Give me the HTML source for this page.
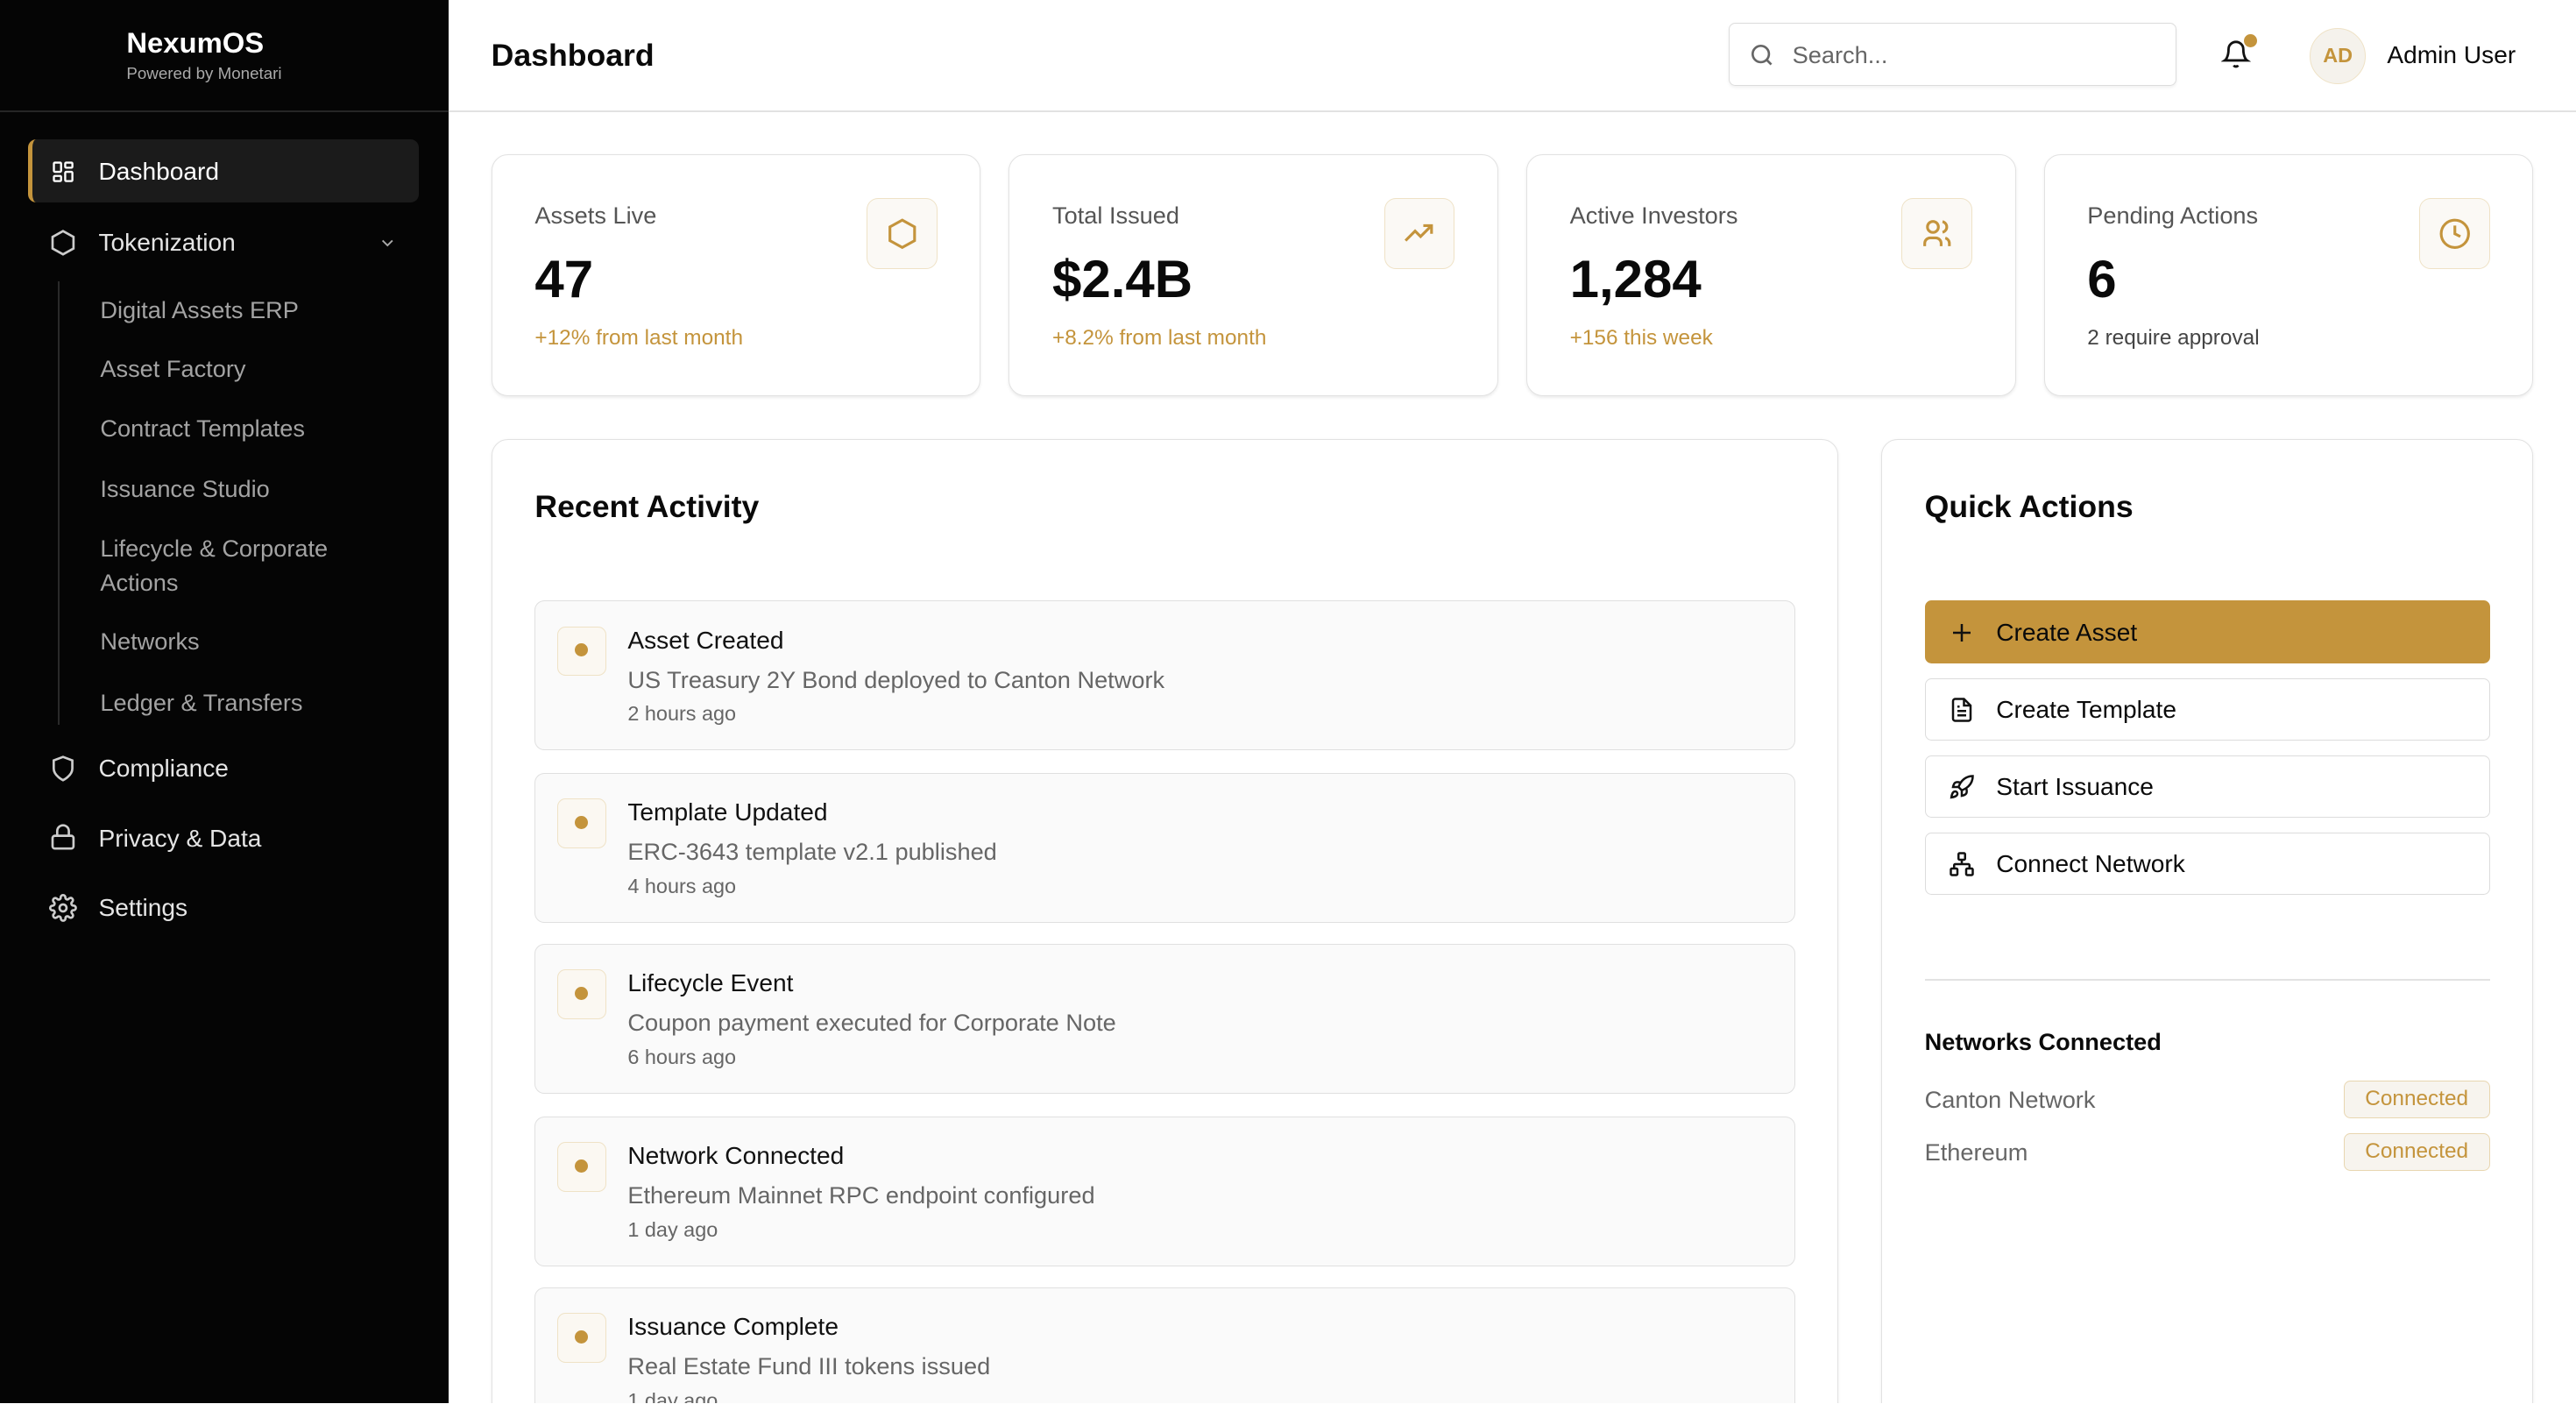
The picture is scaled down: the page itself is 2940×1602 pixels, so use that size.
<!DOCTYPE html>
<html><head><meta charset="utf-8"><style>
*{box-sizing:border-box;margin:0;padding:0}
html,body{width:2940px;height:1602px;overflow:hidden;background:#fff}
#r{zoom:1.875;width:1568px;height:854px;position:relative;font-family:"Liberation Sans",sans-serif;color:#0a0a0a;overflow:hidden}
.a{position:absolute}
.sb{left:0;top:0;width:273px;height:854px;background:#050505;color:#fff}
.nav{position:absolute;left:31px;font-size:15px;color:#e5e5e5}
.sub{position:absolute;left:61px;font-size:14.5px;color:#a3a3a3}
.card{position:absolute;background:#fff;border:1px solid #e2e2e2;border-radius:10px;box-shadow:0 1px 2px rgba(0,0,0,.08)}
.ib{position:absolute;width:43px;height:43px;border:1px solid #efe2c6;background:#fbf9f5;border-radius:7px;display:flex;align-items:center;justify-content:center}
.lbl{position:absolute;left:26px;top:28px;font-size:14.5px;color:#555}
.big{position:absolute;left:26px;top:57px;font-size:32px;font-weight:bold}
.ch{position:absolute;left:26px;top:104px;font-size:13px;color:#c4943c}
.it{position:absolute;left:26px;width:767px;height:91px;background:#fafafa;border:1px solid #e0e0e0;border-radius:6px}
.it .d{position:absolute;left:13px;top:15px;width:30px;height:30px;border:1px solid #efe2c6;background:#fbf8f2;border-radius:5px}
.it .d:after{content:"";position:absolute;left:10px;top:10px;width:8px;height:8px;border-radius:50%;background:#c4943c}
.it b{position:absolute;left:56px;top:15px;font-size:15px;font-weight:normal;color:#111}
.it p{position:absolute;left:56px;top:39px;font-size:14.5px;color:#666}
.it i{position:absolute;left:56px;top:61px;font-size:12.5px;color:#666;font-style:normal}
.qb{position:absolute;left:26px;width:344px;height:38px;border:1px solid #dcdcdc;border-radius:4px;font-size:15px;display:flex;align-items:center;padding-left:14px;gap:13px;background:#fff;padding-top:1px}
.bd{position:absolute;left:281px;width:89px;height:23px;border:1px solid #e8d6b0;background:#f7f4ee;border-radius:4px;color:#c4943c;font-size:13px;text-align:center;line-height:21px}
svg{display:block}
</style></head><body><div id="r">
<div class="a sb">
  <div class="a" style="left:77px;top:16px;font-size:17.5px;font-weight:bold">NexumOS</div>
  <div class="a" style="left:77px;top:39px;font-size:10px;color:#aaa">Powered by Monetari</div>
  <div class="a" style="left:0;top:67px;width:273px;height:1px;background:#262626"></div>
  <div class="a" style="left:17px;top:85px;width:238px;height:38px;background:#1b1b1b;border-radius:5px;border-left:3px solid #c4943c"></div>
  <div class="nav" style="top:96px;color:#fff;left:60px">Dashboard</div>
  <svg class="a" style="left:31px;top:97px" width="15" height="15" viewBox="0 0 24 24" fill="none" stroke="#fff" stroke-width="2"><rect x="3" y="3" width="7" height="9" rx="1"/><rect x="14" y="3" width="7" height="5" rx="1"/><rect x="14" y="12" width="7" height="9" rx="1"/><rect x="3" y="16" width="7" height="5" rx="1"/></svg>
  <svg class="a" style="left:30px;top:139px" width="17" height="17" viewBox="0 0 24 24" fill="none" stroke="#ccc" stroke-width="2"><path d="M12 2l9 5v10l-9 5-9-5V7z"/></svg>
  <div class="nav" style="top:139px;left:60px">Tokenization</div>
  <svg class="a" style="left:230px;top:142px" width="12" height="12" viewBox="0 0 24 24" fill="none" stroke="#aaa" stroke-width="2"><path d="M6 9l6 6 6-6"/></svg>
  <div class="a" style="left:35px;top:171px;width:1px;height:270px;background:#2a2a2a"></div>
  <div class="sub" style="top:180px">Digital Assets ERP</div>
  <div class="sub" style="top:216px">Asset Factory</div>
  <div class="sub" style="top:252px">Contract Templates</div>
  <div class="sub" style="top:289px">Issuance Studio</div>
  <div class="sub" style="top:323px;line-height:21px">Lifecycle &amp; Corporate<br>Actions</div>
  <div class="sub" style="top:382px">Networks</div>
  <div class="sub" style="top:419px">Ledger &amp; Transfers</div>
  <svg class="a" style="left:30px;top:459px" width="17" height="17" viewBox="0 0 24 24" fill="none" stroke="#ccc" stroke-width="2"><path d="M12 22s8-4 8-10V5l-8-3-8 3v7c0 6 8 10 8 10z"/></svg>
  <div class="nav" style="top:459px;left:60px">Compliance</div>
  <svg class="a" style="left:30px;top:501px" width="17" height="17" viewBox="0 0 24 24" fill="none" stroke="#ccc" stroke-width="2"><rect x="3" y="11" width="18" height="11" rx="2"/><path d="M7 11V7a5 5 0 0110 0v4"/></svg>
  <div class="nav" style="top:502px;left:60px">Privacy &amp; Data</div>
  <svg class="a" style="left:30px;top:544px" width="17" height="17" viewBox="0 0 24 24" fill="none" stroke="#ccc" stroke-width="2"><circle cx="12" cy="12" r="3"/><path d="M19.4 15a1.7 1.7 0 00.3 1.8l.1.1a2 2 0 11-2.8 2.8l-.1-.1a1.7 1.7 0 00-1.8-.3 1.7 1.7 0 00-1 1.5V21a2 2 0 01-4 0v-.1a1.7 1.7 0 00-1.1-1.5 1.7 1.7 0 00-1.8.3l-.1.1a2 2 0 11-2.8-2.8l.1-.1a1.7 1.7 0 00.3-1.8 1.7 1.7 0 00-1.5-1H3a2 2 0 010-4h.1a1.7 1.7 0 001.5-1.1 1.7 1.7 0 00-.3-1.8l-.1-.1a2 2 0 112.8-2.8l.1.1a1.7 1.7 0 001.8.3H9a1.7 1.7 0 001-1.5V3a2 2 0 014 0v.1a1.7 1.7 0 001 1.5 1.7 1.7 0 001.8-.3l.1-.1a2 2 0 112.8 2.8l-.1.1a1.7 1.7 0 00-.3 1.8V9a1.7 1.7 0 001.5 1H21a2 2 0 010 4h-.1a1.7 1.7 0 00-1.5 1z"/></svg>
  <div class="nav" style="top:544px;left:60px">Settings</div>
</div>
<div class="a" style="left:273px;top:67px;width:1295px;height:1px;background:#e2e2e2"></div>
<div class="a" style="left:299px;top:23px;font-size:19px;font-weight:bold">Dashboard</div>
<div class="a" style="left:1052px;top:14px;width:273px;height:38px;border:1px solid #dcdcdc;border-radius:4px;box-shadow:0 1px 2px rgba(0,0,0,.06)"></div>
<svg class="a" style="left:1064px;top:25px" width="17" height="17" viewBox="0 0 24 24" fill="none" stroke="#666" stroke-width="2"><circle cx="11" cy="11" r="7"/><path d="M20 20l-4-4"/></svg>
<div class="a" style="left:1091px;top:25px;font-size:14.5px;color:#666">Search...</div>
<svg class="a" style="left:1352px;top:24px" width="18" height="18" viewBox="0 0 24 24" fill="none" stroke="#111" stroke-width="2"><path d="M6 8a6 6 0 0112 0c0 7 3 9 3 9H3s3-2 3-9M10.3 21a1.9 1.9 0 003.4 0"/></svg>
<div class="a" style="left:1366px;top:21px;width:8px;height:8px;border-radius:50%;background:#c4943c"></div>
<div class="a" style="left:1406px;top:17px;width:34px;height:34px;border-radius:50%;background:#f5f2ec;border:1px solid #efe2c6;color:#c4943c;font-size:12.5px;font-weight:bold;text-align:center;line-height:32px">AD</div>
<div class="a" style="left:1453px;top:25px;font-size:15px">Admin User</div>
<div class="card" style="left:299px;top:94px;width:298px;height:147px"><div class="lbl">Assets Live</div><div class="big">47</div><div class="ch">+12% from last month</div>
<div class="ib" style="left:228px;top:26px"><svg width="20" height="20" viewBox="0 0 24 24" fill="none" stroke="#c4943c" stroke-width="2"><path d="M12 2l9 5v10l-9 5-9-5V7z"/></svg></div></div>
<div class="card" style="left:614px;top:94px;width:298px;height:147px"><div class="lbl">Total Issued</div><div class="big">$2.4B</div><div class="ch">+8.2% from last month</div>
<div class="ib" style="left:228px;top:26px"><svg width="20" height="20" viewBox="0 0 24 24" fill="none" stroke="#c4943c" stroke-width="2"><path d="M2 17l7-7 4 4 8-8M15 6h6v6"/></svg></div></div>
<div class="card" style="left:929px;top:94px;width:298px;height:147px"><div class="lbl">Active Investors</div><div class="big">1,284</div><div class="ch">+156 this week</div>
<div class="ib" style="left:228px;top:26px"><svg width="20" height="20" viewBox="0 0 24 24" fill="none" stroke="#c4943c" stroke-width="2"><circle cx="9" cy="7" r="4"/><path d="M3 21v-2a4 4 0 014-4h4a4 4 0 014 4v2M16 3.1a4 4 0 010 7.8M21 21v-2a4 4 0 00-3-3.9"/></svg></div></div>
<div class="card" style="left:1244px;top:94px;width:298px;height:147px"><div class="lbl">Pending Actions</div><div class="big">6</div><div class="ch" style="color:#444">2 require approval</div>
<div class="ib" style="left:228px;top:26px"><svg width="20" height="20" viewBox="0 0 24 24" fill="none" stroke="#c4943c" stroke-width="2"><circle cx="12" cy="12" r="10"/><path d="M12 6v6l4 2"/></svg></div></div>
<div class="card" style="left:299px;top:267px;width:820px;height:620px">
  <div class="a" style="left:26px;top:30px;font-size:19px;font-weight:bold">Recent Activity</div>
  <div class="it" style="top:98px"><div class="d"></div><b>Asset Created</b><p>US Treasury 2Y Bond deployed to Canton Network</p><i>2 hours ago</i></div>
  <div class="it" style="top:203px"><div class="d"></div><b>Template Updated</b><p>ERC-3643 template v2.1 published</p><i>4 hours ago</i></div>
  <div class="it" style="top:307px"><div class="d"></div><b>Lifecycle Event</b><p>Coupon payment executed for Corporate Note</p><i>6 hours ago</i></div>
  <div class="it" style="top:412px"><div class="d"></div><b>Network Connected</b><p>Ethereum Mainnet RPC endpoint configured</p><i>1 day ago</i></div>
  <div class="it" style="top:516px"><div class="d"></div><b>Issuance Complete</b><p>Real Estate Fund III tokens issued</p><i>1 day ago</i></div>
</div>
<div class="card" style="left:1145px;top:267px;width:397px;height:620px">
  <div class="a" style="left:26px;top:30px;font-size:19px;font-weight:bold">Quick Actions</div>
  <div class="qb" style="top:98px;background:#c4943c;border-color:#c4943c"><svg width="16" height="16" viewBox="0 0 24 24" fill="none" stroke="#111" stroke-width="2"><path d="M12 4v16M4 12h16"/></svg>Create Asset</div>
  <div class="qb" style="top:145px"><svg width="16" height="16" viewBox="0 0 24 24" fill="none" stroke="#111" stroke-width="2"><path d="M14 2H6a2 2 0 00-2 2v16a2 2 0 002 2h12a2 2 0 002-2V8z"/><path d="M14 2v6h6M8 13h8M8 17h8M8 9h2"/></svg>Create Template</div>
  <div class="qb" style="top:192px"><svg width="16" height="16" viewBox="0 0 24 24" fill="none" stroke="#111" stroke-width="2"><path d="M4.5 16.5c-1.5 1.3-2 5-2 5s3.7-.5 5-2c.7-.8.7-2.1-.1-2.9a2.2 2.2 0 00-2.9-.1zM12 15l-3-3a22 22 0 012-4A13 13 0 0122 2c0 2.7-.8 7.5-6 11a22 22 0 01-4 2z"/><path d="M9 12H4s.6-3 2-4c1.6-1.1 5 0 5 0M12 15v5s3-.6 4-2c1.1-1.6 0-5 0-5"/></svg>Start Issuance</div>
  <div class="qb" style="top:239px"><svg width="16" height="16" viewBox="0 0 24 24" fill="none" stroke="#111" stroke-width="2"><rect x="16" y="16" width="6" height="6" rx="1"/><rect x="2" y="16" width="6" height="6" rx="1"/><rect x="9" y="2" width="6" height="6" rx="1"/><path d="M5 16v-3a1 1 0 011-1h12a1 1 0 011 1v3M12 12V8"/></svg>Connect Network</div>
  <div class="a" style="left:26px;top:328px;width:344px;height:1px;background:#e2e2e2"></div>
  <div class="a" style="left:26px;top:358px;font-size:14.5px;font-weight:bold">Networks Connected</div>
  <div class="a" style="left:26px;top:393px;font-size:14.5px;color:#666">Canton Network</div>
  <div class="bd" style="top:390px">Connected</div>
  <div class="a" style="left:26px;top:425px;font-size:14.5px;color:#666">Ethereum</div>
  <div class="bd" style="top:422px">Connected</div>
</div>
</div></body></html>
